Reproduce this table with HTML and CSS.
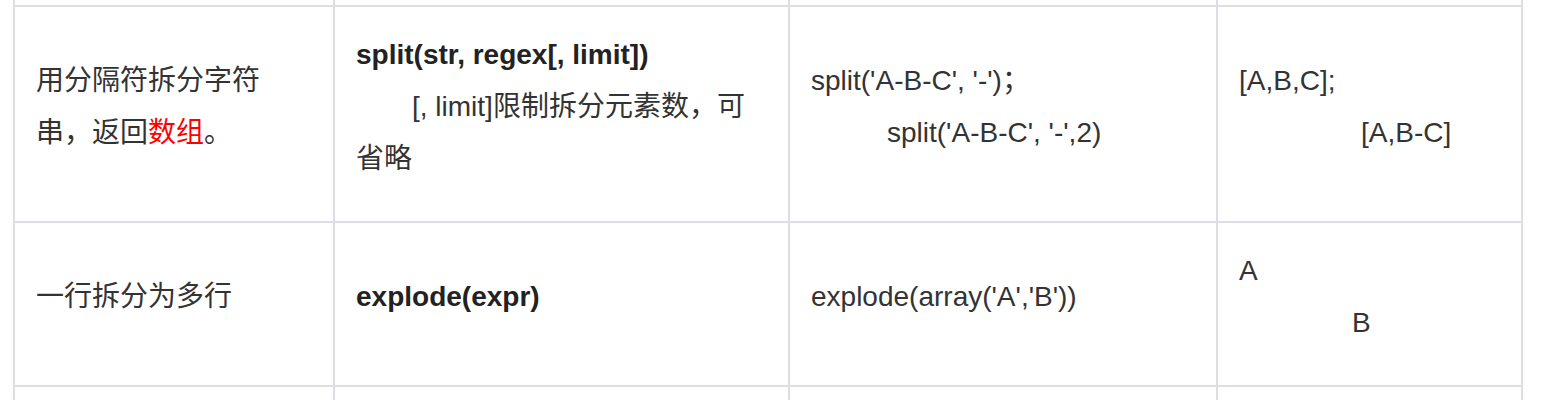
FILE: index.html
```html
<!DOCTYPE html>
<html lang="zh-CN">
<head>
<meta charset="utf-8">
<title>split / explode</title>
<link rel="stylesheet" href="styles.css">
</head>
<body>
<table class="fn-table">
  <colgroup>
    <col class="c1"><col class="c2"><col class="c3"><col class="c4">
  </colgroup>
  <tbody>
    <tr class="prev-row">
      <td></td><td></td><td></td><td></td>
    </tr>
    <tr>
      <td>用分隔符拆分字符串，返回<span class="red">数组</span>。</td>
      <td>
        <div class="bold">split(str, regex[, limit])</div>
        <div class="ind-56">[, limit]限制拆分元素数，可省略</div>
      </td>
      <td>
        <div>split('A-B-C', '-')；</div>
        <div class="ind-76">split('A-B-C', '-',2)</div>
      </td>
      <td>
        <div>[A,B,C];</div>
        <div class="ind-122">[A,B-C]</div>
      </td>
    </tr>
    <tr>
      <td>一行拆分为多行</td>
      <td><span class="bold">explode(expr)</span></td>
      <td>explode(array('A','B'))</td>
      <td>
        <div>A</div>
        <div class="ind-113">B</div>
      </td>
    </tr>
    <tr class="next-row">
      <td></td><td></td><td></td><td></td>
    </tr>
  </tbody>
</table>
</body>
</html>
```
FILE: styles.css
```css
html, body {
  margin: 0;
  padding: 0;
  background: #ffffff;
  overflow: hidden;
}

body {
  font-family: "Liberation Sans", "Noto Sans CJK SC", sans-serif;
  font-size: 28px;
  line-height: 52px;
  color: #333333;
}

.fn-table {
  border-collapse: collapse;
  table-layout: fixed;
  width: 1510px;
  margin: -39px 0 0 13px;
}

.c1 { width: 320px; }
.c2 { width: 455px; }
.c3 { width: 428px; }
.c4 { width: 305px; }

.fn-table td {
  border: 2px solid #dcdee3;
  padding: 22px 22px 36px 21px;
  vertical-align: middle;
  text-align: left;
}

.prev-row td {
  height: 42px;
  padding: 0;
}

.next-row td {
  height: 60px;
  padding: 0;
}

.bold {
  font-weight: bold;
  color: #222222;
}

.red {
  color: #ff0000;
}

.ind-56 { text-indent: 56px; }
.ind-76 { padding-left: 76px; }
.ind-122 { padding-left: 122px; }
.ind-113 { padding-left: 113px; }
```
